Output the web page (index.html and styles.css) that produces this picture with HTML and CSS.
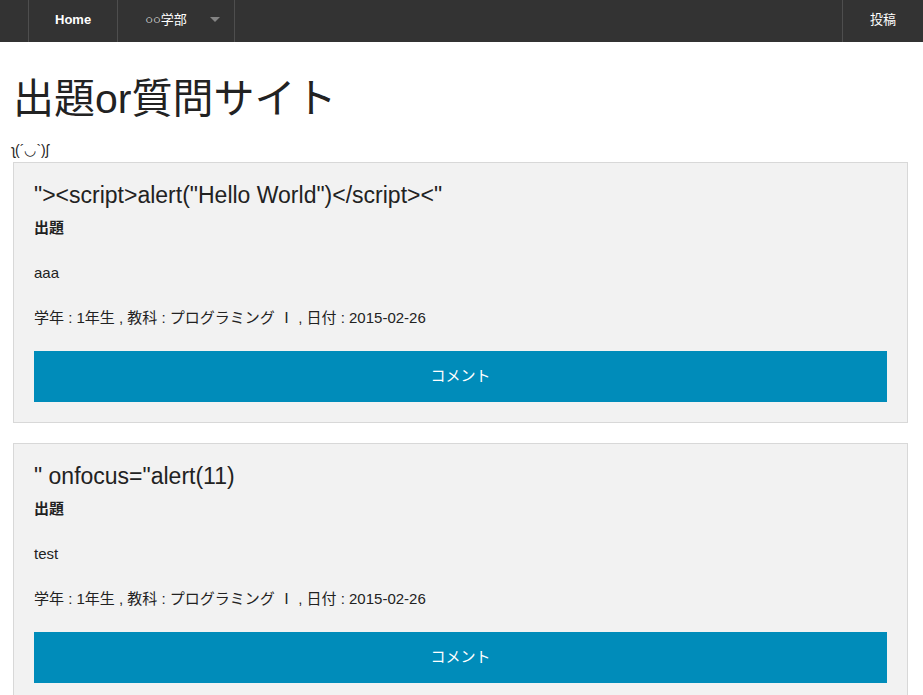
FILE: index.html
```html
<!DOCTYPE html>
<html lang="ja">
<head>
<meta charset="utf-8">
<title>出題or質問サイト</title>
<link rel="stylesheet" href="styles.css">
</head>
<body>
<nav class="top-bar">
  <div class="brand"></div>
  <ul class="menu">
    <li class="item"><a class="link bold" href="#">Home</a></li>
    <li class="item dropdown"><a class="link" href="#">○○学部</a><span class="arrow"></span></li>
  </ul>
  <ul class="menu right">
    <li class="item"><a class="link" href="#">投稿</a></li>
  </ul>
</nav>
<main class="container">
  <h1 class="title">出題or質問サイト</h1>
  <div class="kao">ʅ(´◡`)ʃ</div>
  <section class="panel">
    <h4 class="panel-title">"&gt;&lt;script&gt;alert("Hello World")&lt;/script&gt;&lt;"</h4>
    <div class="kind">出題</div>
    <p class="text">aaa</p>
    <p class="text">学年 : 1年生 , 教科 : プログラミング Ⅰ , 日付 : 2015-02-26</p>
    <a class="button" href="#">コメント</a>
  </section>
  <section class="panel">
    <h4 class="panel-title">" onfocus="alert(11)</h4>
    <div class="kind">出題</div>
    <p class="text">test</p>
    <p class="text">学年 : 1年生 , 教科 : プログラミング Ⅰ , 日付 : 2015-02-26</p>
    <a class="button" href="#">コメント</a>
  </section>
</main>
</body>
</html>
```
FILE: styles.css
```css
html, body {
  margin: 0;
  padding: 0;
  background: #fff;
  color: #222;
  font-family: "Liberation Sans", Arial, "Noto Sans CJK JP", sans-serif;
}

.top-bar {
  display: flex;
  height: 42px;
  background: #333;
  font-size: 13px;
}
.brand {
  width: 28px;
}
.menu {
  display: flex;
  list-style: none;
  margin: 0;
  padding: 0;
}
.menu.right {
  margin-left: auto;
}
.item {
  display: flex;
  align-items: center;
  border-left: 1px solid #4e4e4e;
  height: 42px;
  box-sizing: border-box;
}
.link {
  color: #fff;
  text-decoration: none;
  line-height: 40px;
  padding: 0 26px 2px 26px;
}
.bold {
  font-weight: bold;
}
.menu.right .link {
  padding: 0 27px 2px 27px;
}
.dropdown {
  position: relative;
  width: 118px;
  border-right: 1px solid #4e4e4e;
}
.dropdown .link {
  padding-left: 27px;
}
.arrow {
  position: absolute;
  right: 14px;
  top: 17px;
  width: 0;
  height: 0;
  border-left: 5px solid transparent;
  border-right: 5px solid transparent;
  border-top: 5px solid rgba(255, 255, 255, 0.4);
}

.container {
  padding: 29px 15px 0 13px;
}
.title {
  margin: 0 0 13px 0;
  font-size: 41px;
  font-weight: normal;
  line-height: 1.4;
  color: #222;
}
.kao {
  font-size: 14px;
  line-height: 18px;
  margin-left: -1px;
  margin-bottom: 3px;
}

.panel {
  background: #f2f2f2;
  border: 1px solid #d8d8d8;
  padding: 20px;
  margin-bottom: 20px;
}
.panel-title {
  margin: 0 0 8px 0;
  font-size: 23px;
  font-weight: normal;
  line-height: 25px;
  color: #222;
}
.kind {
  font-size: 15px;
  font-weight: bold;
  line-height: 24px;
  margin-bottom: 21px;
}
.text {
  margin: 0 0 21px 0;
  font-size: 15px;
  line-height: 24px;
}
.button {
  display: block;
  background: #008cba;
  color: #fff;
  text-align: center;
  text-decoration: none;
  font-size: 15px;
  line-height: 49px;
  height: 51px;
}
```
